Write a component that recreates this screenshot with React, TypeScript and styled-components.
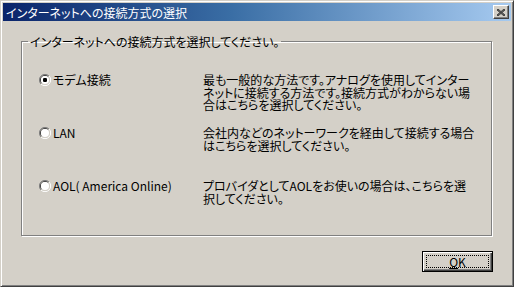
import styled, { createGlobalStyle } from "styled-components";

const GlobalStyle = createGlobalStyle`
  body {
    margin: 0;
    background: #ffffff;
    font-family: "Noto Sans CJK JP", "Noto Sans", sans-serif;
    font-size: 12px;
    font-feature-settings: "palt";
  }
`;

const options = [
  {
    id: "modem",
    label: "モデム接続",
    checked: true,
    lines: [
      "最も一般的な方法です。アナログを使用してインター",
      "ネットに接続する方法です。接続方式がわからない場",
      "合はこちらを選択してください。",
    ],
  },
  {
    id: "lan",
    label: "LAN",
    checked: false,
    lines: [
      "会社内などのネットーワークを経由して接続する場合",
      "はこちらを選択してください。",
    ],
  },
  {
    id: "aol",
    label: "AOL( America Online)",
    checked: false,
    lines: [
      "プロバイダとしてAOLをお使いの場合は、こちらを選",
      "択してください。",
    ],
  },
];

function RadioMark({ checked }: { checked: boolean }) {
  return (
    <svg width="12" height="12" viewBox="0 0 12 12">
      <path d="M10 2 A5.5 5.5 0 0 0 2 10" stroke="#808080" strokeWidth="1" fill="none" />
      <path d="M9.3 2.7 A4.5 4.5 0 0 0 2.7 9.3" stroke="#404040" strokeWidth="1" fill="none" />
      <path d="M2 10 A5.5 5.5 0 0 0 10 2" stroke="#ffffff" strokeWidth="1" fill="none" />
      <path d="M2.7 9.3 A4.5 4.5 0 0 0 9.3 2.7" stroke="#d4d0c8" strokeWidth="1" fill="none" />
      <circle cx="6" cy="6" r="4" fill="#ffffff" />
      {checked && <rect x="4" y="4" width="4" height="4" rx="1.2" fill="#000000" />}
    </svg>
  );
}

export default function App() {
  return (
    <>
      <GlobalStyle />
      <Dialog>
        <TitleBar>
          <Title>インターネットへの接続方式の選択</Title>
          <CloseButton aria-label="close">
            <svg width="8" height="7" viewBox="0 0 8 7">
              <path d="M0 0 L8 7 M1 0 L8 6 M0 1 L7 7 M8 0 L0 7 M7 0 L0 6 M8 1 L1 7" stroke="#404040" strokeWidth="1" />
            </svg>
          </CloseButton>
        </TitleBar>
        <Body>
          <GroupBox>
            <Legend>インターネットへの接続方式を選択してください。</Legend>
            <OptionGrid>
              {options.map((o) => (
                <OptionRow key={o.id}>
                  <RadioLabel>
                    <RadioMark checked={o.checked} />
                    <span>{o.label}</span>
                  </RadioLabel>
                  <Description>
                    {o.lines.map((l, i) => (
                      <div key={i}>{l}</div>
                    ))}
                  </Description>
                </OptionRow>
              ))}
            </OptionGrid>
          </GroupBox>
          <ButtonRow>
            <OkButton>
              <FocusRect>
                <u>O</u>K
              </FocusRect>
            </OkButton>
          </ButtonRow>
        </Body>
      </Dialog>
    </>
  );
}

const Dialog = styled.div`
  width: 514px;
  height: 287px;
  box-sizing: border-box;
  background: #d4d0c8;
  border-top: 1px solid #d4d0c8;
  border-left: 1px solid #d4d0c8;
  border-right: 1px solid #404040;
  border-bottom: 1px solid #404040;
  box-shadow: inset 1px 1px 0 #ffffff, inset -1px -1px 0 #808080;
  padding: 2px;
  display: flex;
  flex-direction: column;
`;

const TitleBar = styled.div`
  height: 18px;
  display: flex;
  align-items: center;
  justify-content: space-between;
  padding: 0 2px 0 3px;
  background: linear-gradient(90deg, #0a246a 0%, #3a6ea5 45%, #a6caf0 100%);
`;

const Title = styled.div`
  color: #ffffff;
  font-size: 12px;
  line-height: 13px;
  white-space: nowrap;
`;

const CloseButton = styled.div`
  width: 16px;
  height: 14px;
  box-sizing: border-box;
  background: #d4d0c8;
  border-top: 1px solid #ffffff;
  border-left: 1px solid #ffffff;
  border-right: 1px solid #404040;
  border-bottom: 1px solid #404040;
  box-shadow: inset -1px -1px 0 #808080;
  display: flex;
  align-items: center;
  justify-content: center;
`;

const Body = styled.div`
  flex: 1;
  padding: 14px 0 0 18px;
  display: flex;
  flex-direction: column;
`;

const GroupBox = styled.fieldset`
  margin: 0;
  width: 471px;
  height: 201px;
  box-sizing: border-box;
  border: 1px solid #808080;
  box-shadow: inset 1px 1px 0 #ffffff, 1px 1px 0 #ffffff;
  padding: 24px 0 0 17px;
`;

const Legend = styled.legend`
  padding: 0 2px;
  margin-left: -11px;
  line-height: 13px;
  color: #000000;
  white-space: nowrap;
`;

const OptionGrid = styled.div`
  display: grid;
  grid-auto-rows: 53px;
`;

const OptionRow = styled.div`
  display: grid;
  grid-template-columns: 164px 1fr;
  align-items: start;
`;

const RadioLabel = styled.label`
  display: flex;
  align-items: center;
  gap: 2px;
  line-height: 13px;
  white-space: nowrap;
  padding-top: 1px;
`;

const Description = styled.div`
  padding-top: 2px;
  line-height: 12.5px;
  white-space: nowrap;
  color: #000000;
`;

const ButtonRow = styled.div`
  width: 472px;
  display: flex;
  justify-content: flex-end;
  margin-top: 15px;
`;

const OkButton = styled.button`
  width: 71px;
  height: 21px;
  box-sizing: border-box;
  padding: 3px;
  background: #d4d0c8;
  border: 1px solid #000000;
  box-shadow: inset 1px 1px 0 #ffffff, inset -1px -1px 0 #404040, inset -2px -2px 0 #808080;
  font-family: "Noto Sans CJK JP", "Noto Sans", sans-serif;
  font-size: 12px;
  color: #000000;
  display: flex;
`;

const FocusRect = styled.span`
  flex: 1;
  border: 1px dotted #000000;
  display: flex;
  align-items: center;
  justify-content: center;
  line-height: 11px;

  u {
    text-decoration-thickness: 1px;
    text-underline-offset: 1px;
  }
`;
